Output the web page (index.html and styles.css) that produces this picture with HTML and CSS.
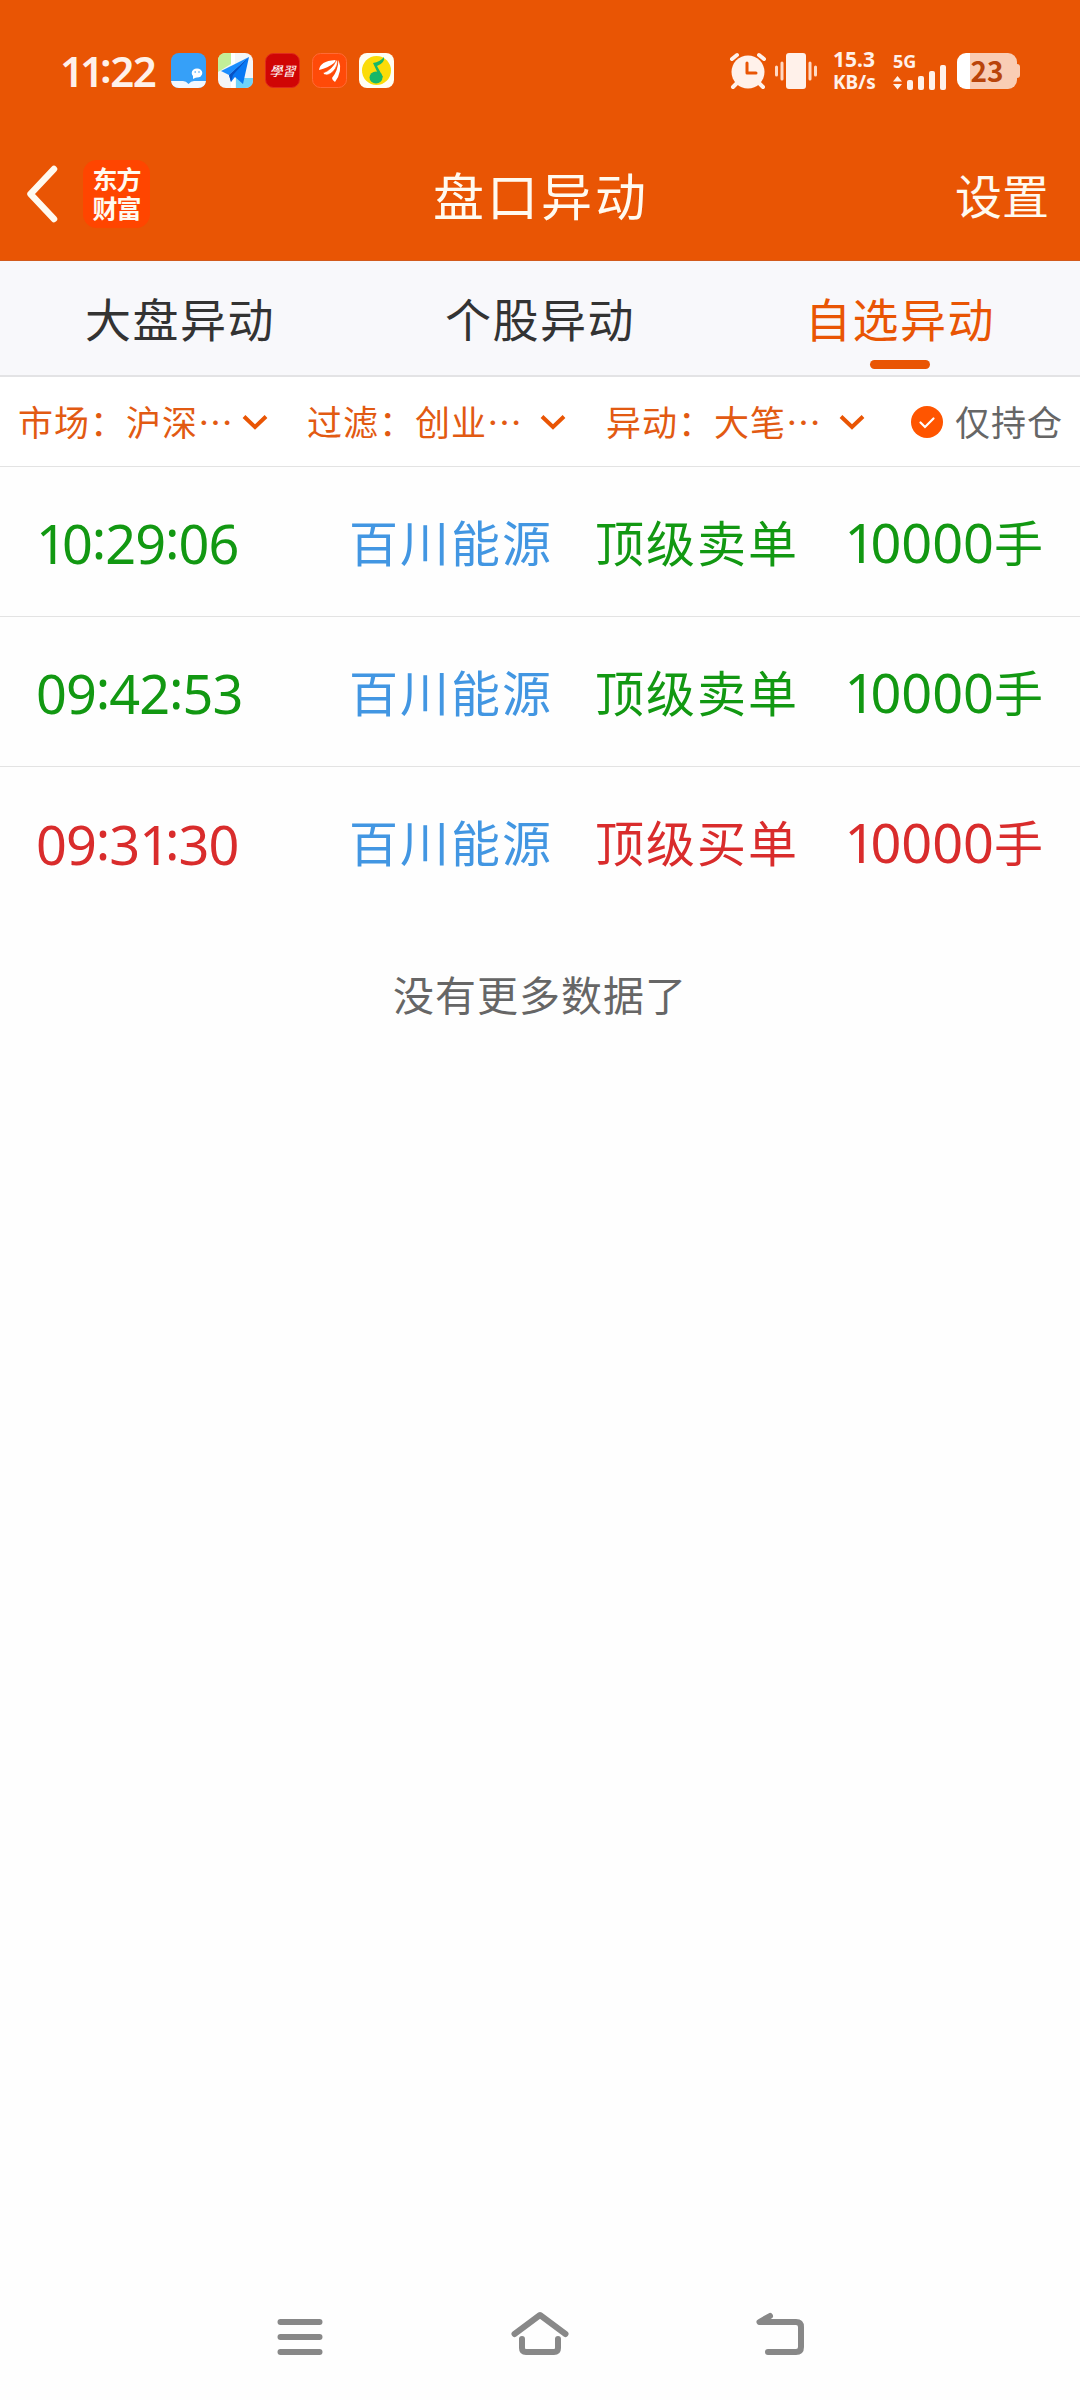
FILE: index.html
```html
<!DOCTYPE html>
<html lang="zh-CN">
<head>
  <meta charset="UTF-8" />
  <meta name="viewport" content="width=device-width, initial-scale=1.0"/>
  <title>盘口异动</title>
  <link rel="stylesheet" href="styles.css">
</head>
<body>
  <div class="screen">
    <header class="header">
      <div class="status-bar">
        <div class="clock"><span class="ones">11</span><span class="colon">:</span>22</div>
        <div class="app-icons">
          <svg viewBox="0 0 35 35">
            <rect width="35" height="35" rx="8" fill="#36a0f8"/>
            <path d="M0 28H12Q15 28 17.500 31Q20 28 23 28H35Q34 35 27 35H8Q1 35 0 28Z" fill="#f3f8ff"/>
            <ellipse cx="26" cy="20" rx="5.300" ry="4.600" fill="#fff"/>
            <path d="M22 22l0 4 4-2z" fill="#fff"/>
            <circle cx="24.200" cy="19" r=".8" fill="#36a0f8"/>
            <circle cx="28" cy="19" r=".8" fill="#36a0f8"/>
          </svg>
          <svg viewBox="0 0 35 35">
            <rect width="35" height="35" rx="8" fill="#f4f5f7"/>
            <path d="M8 0H13V11L0 19V8Q0 0 8 0Z" fill="#c3ef98"/>
            <path d="M18 25H35V27Q35 35 27 35H18Z" fill="#6fd3fa"/>
            <path d="M13 0h4v35h-4z" fill="#fff"/>
            <path d="M31 4L3 18l8 4z" fill="#1b8dff"/>
            <path d="M31 4L11 22l2 7 4-5 8 7z" fill="#0878f4"/>
            <path d="M31 4L11 22l2 7 2-7z" fill="#0752c4"/>
          </svg>
          <svg viewBox="0 0 35 35">
            <rect x=".5" y=".5" width="34" height="34" rx="8" fill="#d00505" stroke="#e02a1c"/>
            <text class="xuexi" x="17.500" y="23" text-anchor="middle">學習</text>
          </svg>
          <svg viewBox="0 0 35 35">
            <rect x=".5" y=".5" width="34" height="34" rx="8" fill="#ff4a08" stroke="#ff6a35"/>
            <path d="M7 17Q8 8 23 7Q25 8 22 10Q16 15 7 17Z" fill="#fff"/>
            <path d="M11 20Q20 17 24.500 7Q26 7 25 12Q22 20 15 22Q12 22 11 20Z" fill="#fff" stroke="#ff4a08" stroke-width=".6"/>
            <path d="M26.500 7Q31 18 23 29Q20 27 20 25Q26 18 26.500 7Z" fill="#fff"/>
          </svg>
          <svg viewBox="0 0 35 35">
            <rect width="35" height="35" rx="8" fill="#fffef3"/>
            <circle cx="17.500" cy="17.500" r="14.500" fill="#fbdc08"/>
            <ellipse cx="17" cy="24.500" rx="6.500" ry="6" fill="#18b768"/>
            <path d="M21 25L14 10Q21 9 25 4Q26 10 18 13L24 24Z" fill="#18b768"/>
          </svg>
        </div>
        <div class="status-right">
          <svg class="alarm" viewBox="0 0 38 38">
            <g stroke="#fff1ea" stroke-linecap="round" stroke-width="4" fill="none">
              <path d="M3 7L8 3M30 3L35 7M8 31L4 35M30 31L34 35"/>
            </g>
            <circle cx="19" cy="20" r="16.500" fill="#fff1ea"/>
            <path d="M18 11v10h9" fill="none" stroke="#e95504" stroke-width="3" stroke-linecap="round" stroke-linejoin="round"/>
          </svg>
          <svg class="vibrate" viewBox="0 0 42 36">
            <rect x="11" width="20" height="36" rx="3" fill="#fff1ea"/>
            <path d="M1.500 14v8M7 10v16M35 10v16M40.500 14v8" stroke="#ffd9c4" stroke-width="3" stroke-linecap="round"/>
          </svg>
          <div class="net-speed"><span>15.3</span><span class="unit">KB/s</span></div>
          <div class="signal">
            <span>5G</span>
            <svg viewBox="0 0 54 26">
              <path d="M0 16.500L4.500 11 9 16.500zM0 19L4.500 24.500 9 19z" fill="#fff1ea"/>
              <g fill="#fff1ea">
                <rect x="14" y="15" width="6" height="10" rx="2"/>
                <rect x="25" y="11" width="6" height="14" rx="2"/>
                <rect x="36" y="6" width="6" height="19" rx="2"/>
                <rect x="47" y="0" width="6" height="25" rx="2"/>
              </g>
            </svg>
          </div>
          <div class="battery"><span class="battery-level">23</span></div>
        </div>
      </div>

      <div class="title-bar">
        <div class="title-left">
          <svg class="back" viewBox="0 0 34 58">
            <path d="M29 4L5.500 29L29 54" fill="none" stroke="#fffaf0" stroke-width="6.500" stroke-linecap="round" stroke-linejoin="round"/>
          </svg>
          <div class="logo"><span>东方</span><span>财富</span></div>
        </div>
        <h1>盘口异动</h1>
        <div class="settings">设置</div>
      </div>
    </header>

    <nav class="tabs">
      <div class="tab">大盘异动</div>
      <div class="tab">个股异动</div>
      <div class="tab active">自选异动</div>
    </nav>

    <div class="filters">
      <div class="filter market">
        <span>市场：沪深…</span>
        <svg class="chevron" viewBox="0 0 26 16"><path d="M2 2.500L13 13L24 2.500"/></svg>
      </div>
      <div class="filter">
        <span>过滤：创业…</span>
        <svg class="chevron" viewBox="0 0 26 16"><path d="M2 2.500L13 13L24 2.500"/></svg>
      </div>
      <div class="filter">
        <span>异动：大笔…</span>
        <svg class="chevron" viewBox="0 0 26 16"><path d="M2 2.500L13 13L24 2.500"/></svg>
      </div>
      <div class="holding">
        <svg viewBox="0 0 32 32">
          <circle cx="16" cy="16" r="16" fill="#ff5500"/>
          <path d="M9.500 16.500L14 21L22.500 12.500" fill="none" stroke="#fff" stroke-width="2.200" stroke-linecap="round"/>
        </svg>
        <span>仅持仓</span>
      </div>
    </div>

    <main class="list">
      <div class="row sell">
        <span class="time"><span class="one">1</span>0<span class="colon">:</span>29<span class="colon">:</span>06</span>
        <span class="stock">百川能源</span>
        <span class="type">顶级卖单</span>
        <span class="amount"><span class="num"><span class="one">1</span>0000</span>手</span>
      </div>
      <div class="row sell">
        <span class="time">09<span class="colon">:</span>42<span class="colon">:</span>53</span>
        <span class="stock">百川能源</span>
        <span class="type">顶级卖单</span>
        <span class="amount"><span class="num"><span class="one">1</span>0000</span>手</span>
      </div>
      <div class="row buy">
        <span class="time">09<span class="colon">:</span>3<span class="one">1</span><span class="colon">:</span>30</span>
        <span class="stock">百川能源</span>
        <span class="type">顶级买单</span>
        <span class="amount"><span class="num"><span class="one">1</span>0000</span>手</span>
      </div>
      <p class="no-more">没有更多数据了</p>
    </main>

    <footer class="nav-bar">
      <svg viewBox="0 0 60 60"><path d="M10.500 15H49.500M10.500 30H49.500M10.500 45H49.500"/></svg>
      <svg viewBox="0 0 60 60"><path d="M4.500 27L30 8L55.500 27M12 32V41Q12 45 16 45H44Q48 45 48 41V32"/></svg>
      <svg viewBox="0 0 60 60"><path d="M20 9L9.500 15H46Q51 15 51 20V40Q51 45 46 45H18"/></svg>
    </footer>
  </div>
</body>
</html>
```

FILE: styles.css
```css
* {
  box-sizing: border-box;
}

body {
  margin: 0;
  font-family: "Noto Sans CJK SC", "Noto Sans", sans-serif;
  background: #fefefe;
  color: #333;
}

svg {
  display: block;
  flex: none;
}

.screen {
  width: 1080px;
  height: 2400px;
  display: flex;
  flex-direction: column;
}

/* header */
.header {
  height: 261px;
  background: #e95504;
  border-bottom: 1px solid #d25a1c;
}

.status-bar {
  height: 141px;
  padding: 0 63px 0 60px;
  display: flex;
  align-items: center;
  color: #fff1ea;
}

.clock {
  width: 111px;
  font-family: "Noto Sans", sans-serif;
  font-size: 42px;
  font-weight: 600;
  line-height: 60px;
  letter-spacing: -1.500px;
  white-space: nowrap;
}

.clock .ones {
  letter-spacing: -4px;
}

.clock .colon {
  vertical-align: 4px;
  line-height: 1;
}

.app-icons {
  display: flex;
  gap: 12px;
}

.app-icons svg {
  width: 35px;
  height: 35px;
}

.xuexi {
  font-family: "Noto Sans CJK TC", sans-serif;
  font-size: 13px;
  font-style: italic;
  fill: #fff;
}

.status-right {
  margin-left: auto;
  display: flex;
  align-items: center;
}

.alarm {
  width: 38px;
  height: 38px;
  margin-right: 8px;
}

.vibrate {
  width: 42px;
  height: 36px;
  margin-right: 16px;
}

.net-speed {
  width: 60px;
  display: flex;
  flex-direction: column;
  font-family: "Noto Sans", sans-serif;
  font-size: 21px;
  font-weight: 700;
  line-height: 23px;
}

.net-speed .unit {
  font-size: 19px;
}

.signal {
  width: 64px;
  height: 40px;
  display: flex;
  flex-direction: column;
  font-family: "Noto Sans", sans-serif;
  font-size: 18px;
  font-weight: 700;
  line-height: 20px;
}

.signal svg {
  width: 54px;
  height: 26px;
  margin-top: -6px;
}

.battery {
  width: 60px;
  height: 36px;
  border-radius: 9px;
  background: linear-gradient(90deg, #fff 13px, #f9cdb5 13px);
  color: #b9440a;
  text-align: center;
  position: relative;
}

.battery::after {
  content: "";
  position: absolute;
  left: 60px;
  top: 11px;
  width: 3px;
  height: 14px;
  border-radius: 0 3px 3px 0;
  background: #f9cdb5;
}

.battery-level {
  font-size: 28px;
  font-weight: 700;
  line-height: 34px;
}

.title-bar {
  height: 106px;
  padding: 0 31px 0 25px;
  display: grid;
  grid-template-columns: 1fr auto 1fr;
  align-items: center;
  color: #fffaf0;
}

.title-left {
  display: flex;
  align-items: center;
  gap: 24px;
}

.back {
  width: 34px;
  height: 58px;
}

.logo {
  width: 67px;
  height: 68px;
  border-radius: 14px;
  background: #ff4500;
  display: flex;
  flex-direction: column;
  align-items: center;
  justify-content: center;
  padding-bottom: 3px;
  font-size: 25px;
  font-weight: 700;
  line-height: 29px;
  letter-spacing: -1px;
}

h1 {
  margin: 0 0 0 8px;
  font-size: 51px;
  font-weight: 400;
  line-height: 80px;
  letter-spacing: 3px;
}

.settings {
  text-align: right;
  font-size: 47px;
  line-height: 80px;
}

/* tabs */
.tabs {
  height: 116px;
  display: grid;
  grid-template-columns: repeat(3, 1fr);
  background: #f8f8fb;
  border-bottom: 2px solid #e3e3e5;
}

.tab {
  display: flex;
  flex-direction: column;
  align-items: center;
  font-size: 46px;
  line-height: 112px;
  letter-spacing: 1.500px;
}

.tab.active {
  color: #e95504;
}

.tab.active::after {
  content: "";
  width: 60px;
  height: 9px;
  margin-top: -13px;
  border-radius: 5px;
  background: #e95504;
}

/* filter row */
.filters {
  height: 90px;
  padding-left: 18px;
  display: grid;
  grid-template-columns: 289px 299px 304px 1fr;
  align-items: center;
  border-bottom: 1px solid #e3e3e3;
  background: #fff;
  font-size: 35px;
  line-height: 60px;
  letter-spacing: 1px;
}

.filter {
  width: 259px;
  display: flex;
  align-items: center;
  justify-content: space-between;
  color: #e25a12;
  white-space: nowrap;
}

.filter span,
.holding span {
  margin-top: -2px;
}

.filter.market {
  width: 250px;
}

.chevron {
  width: 26px;
  height: 16px;
}

.chevron path {
  fill: none;
  stroke: #e95504;
  stroke-width: 4;
}

.holding {
  display: flex;
  align-items: center;
  gap: 12px;
  margin-left: 1px;
  color: #666;
}

.holding svg {
  width: 32px;
  height: 32px;
}

/* records */
.list {
  flex: 1;
}

.row {
  height: 150px;
  padding: 0 37px 2px 36px;
  display: grid;
  grid-template-columns: 313px 246px 1fr auto;
  align-items: center;
  border-bottom: 1px solid #e3e3e3;
  font-size: 49px;
  line-height: 80px;
}

.row:nth-child(3) {
  border-bottom: none;
}

.time,
.num {
  font-family: "Noto Sans", sans-serif;
  font-size: 54px;
  line-height: 1;
}

.time {
  letter-spacing: -1px;
}

.num {
  vertical-align: -1px;
}

/* the digit 1 is set tighter than the others */
.one {
  letter-spacing: -5px;
}

.time .colon {
  vertical-align: 5px;
}

.stock,
.type {
  letter-spacing: 2px;
}

.stock {
  color: #4296e2;
}

.sell {
  color: #129812;
}

.buy {
  color: #d92c2c;
}

.no-more {
  margin: 46px 0 0;
  text-align: center;
  font-size: 41px;
  line-height: 60px;
  letter-spacing: 1px;
  color: #666;
}

/* system navigation */
.nav-bar {
  height: 126px;
  display: flex;
  justify-content: center;
  align-items: center;
  gap: 180px;
}

.nav-bar svg {
  width: 60px;
  height: 60px;
}

.nav-bar path {
  fill: none;
  stroke: #888;
  stroke-width: 6;
  stroke-linecap: round;
  stroke-linejoin: round;
}
```
